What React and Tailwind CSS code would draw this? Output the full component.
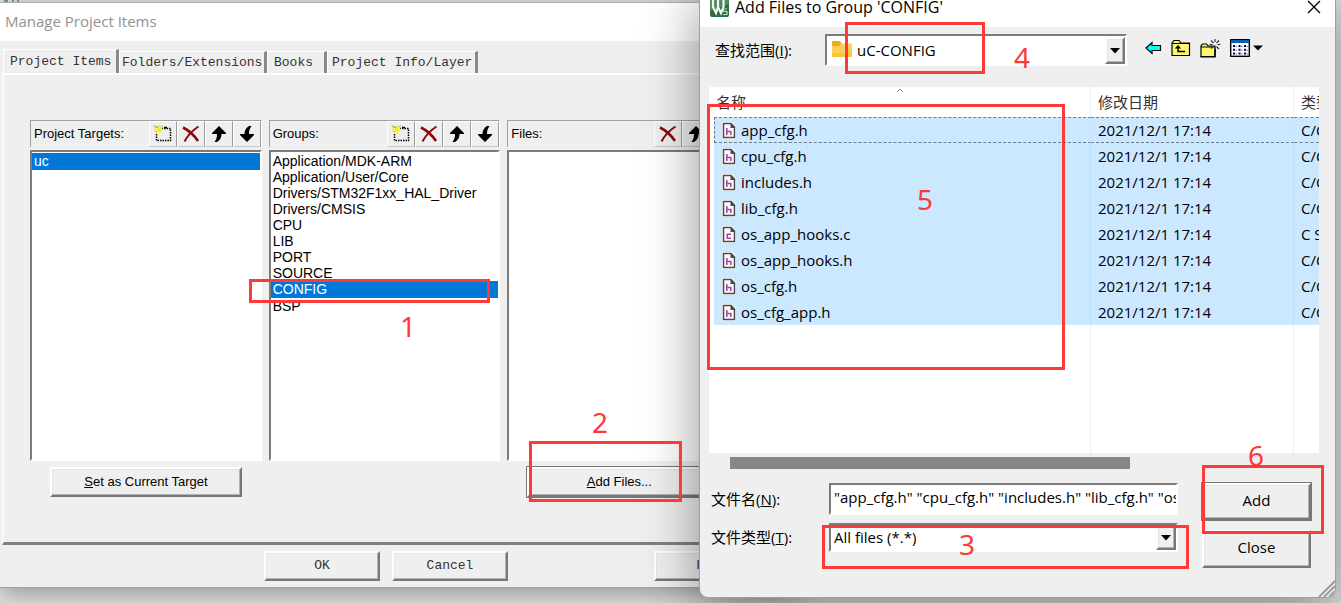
import React from 'react';

const groups = [
  'Application/MDK-ARM',
  'Application/User/Core',
  'Drivers/STM32F1xx_HAL_Driver',
  'Drivers/CMSIS',
  'CPU',
  'LIB',
  'PORT',
  'SOURCE',
  'CONFIG',
  'BSP',
];

const files = [
  { name: 'app_cfg.h', date: '2021/12/1 17:14', type: 'C/C++ Header' },
  { name: 'cpu_cfg.h', date: '2021/12/1 17:14', type: 'C/C++ Header' },
  { name: 'includes.h', date: '2021/12/1 17:14', type: 'C/C++ Header' },
  { name: 'lib_cfg.h', date: '2021/12/1 17:14', type: 'C/C++ Header' },
  { name: 'os_app_hooks.c', date: '2021/12/1 17:14', type: 'C Source' },
  { name: 'os_app_hooks.h', date: '2021/12/1 17:14', type: 'C/C++ Header' },
  { name: 'os_cfg.h', date: '2021/12/1 17:14', type: 'C/C++ Header' },
  { name: 'os_cfg_app.h', date: '2021/12/1 17:14', type: 'C/C++ Header' },
];

const tabs = [
  { label: 'Project Items', className: 'h-6 w-[116px] pl-[6px]' },
  { label: 'Folders/Extensions', className: 'h-[22px] w-[148px] pl-[2px]' },
  { label: 'Books', className: 'h-[22px] w-[60px] pl-[6px]' },
  { label: 'Project Info/Layer', className: 'h-[22px] w-[151px] pl-[4px]' },
];

// Numbered steps drawn over both windows
const marks = [
  { n: 1, box: 'left-[249px] top-[279px] w-[241px] h-[24px]', num: 'left-[400px] top-[310px]' },
  { n: 2, box: 'left-[529px] top-[441px] w-[153px] h-[61px]', num: 'left-[592px] top-[406px]' },
  { n: 3, box: 'left-[822px] top-[525px] w-[367px] h-[44px]', num: 'left-[959px] top-[528px]' },
  { n: 4, box: 'left-[845px] top-[22px] w-[140px] h-[52px]', num: 'left-[1014px] top-[41px]' },
  { n: 5, box: 'left-[707px] top-[104px] w-[358px] h-[266px]', num: 'left-[917px] top-[183px]' },
  { n: 6, box: 'left-[1202px] top-[465px] w-[122px] h-[69px]', num: 'left-[1248px] top-[439px]' },
];

const raised =
  'border-t-2 border-l-2 border-r-2 border-b-2 border-t-white border-l-white border-r-[#777] border-b-[#777] bg-[#efefef] shadow-[inset_-1px_-1px_0_#b4b4b4,inset_1px_1px_0_#e3e3e3]';
const sunken =
  'border-t-2 border-l-2 border-r-2 border-b-2 border-t-[#7b7b7b] border-l-[#7b7b7b] border-r-white border-b-white bg-white';

const NewIcon = () => (
  <svg width="20" height="20" viewBox="0 0 20 20" aria-hidden="true">
    <rect x="3.5" y="4.5" width="14" height="12" fill="none" stroke="#000" strokeWidth="1.500" strokeDasharray="1.5 1" />
    <path d="M0 1h9v8H0z" fill="#efefef" />
    <path d="M6 1v8M1 5.500h9M2.500 2l6 6M9 2L3 8.500" stroke="#f5ee1a" strokeWidth="1.300" />
    <path d="M1 1.500l1.500 2M4 2v2M9.500 1.500l-1 1M2.500 8l1-1" stroke="#8a8a60" />
    <path d="M11 3.500h3" stroke="#000" strokeWidth="1.500" />
  </svg>
);

const DeleteIcon = () => (
  <svg width="20" height="20" viewBox="0 0 20 20" aria-hidden="true">
    <path d="M2 3.500C6 5.500 13 11 17 17" fill="none" stroke="#8b0a0a" strokeWidth="2.600" />
    <path d="M17.500 2.500C12 6 7 11 3.500 17.500" fill="none" stroke="#8b0a0a" strokeWidth="2" />
  </svg>
);

const ArrowIcon = ({ down }) => (
  <svg width="20" height="20" viewBox="0 0 20 20" className={down ? 'rotate-180' : ''} aria-hidden="true">
    <path d="M10 2l7 7v1h-4.500c0 3-1 6-4.500 8H5.500c2-2.500 2.500-5 2.500-8H3V9z" fill="#000" />
  </svg>
);

const FileIcon = ({ kind }) => (
  <svg width="14" height="17" viewBox="0 0 14 17" aria-hidden="true">
    <path d="M0 0h10l4 4v13H0z" fill="#fff" />
    <path d="M1.500 1.500h7.500l3.500 3.500v10.500h-11z" fill="#fdfbfd" stroke="#4a4a4a" strokeWidth="1.500" />
    <path d="M8.500 1v5h5z" fill="#4a4a4a" />
    {kind === 'h' ? (
      <path d="M4.800 6v7M4.800 9.500h4v3.500" fill="none" stroke="#a04ba3" strokeWidth="1.600" />
    ) : (
      <path d="M9 8.300H5.300v4H9" fill="none" stroke="#a04ba3" strokeWidth="1.600" />
    )}
  </svg>
);

const FolderIcon = () => (
  <svg width="20" height="18" viewBox="0 0 20 18" aria-hidden="true">
    <path d="M1 1h7l2 3v6H0V2a1 1 0 0 1 1-1z" fill="#efac13" />
    <path d="M0 6h7l2.500-2.500H19a1 1 0 0 1 1 1V16a1 1 0 0 1-1 1H1a1 1 0 0 1-1-1z" fill="#ffd05a" />
    <path d="M0 13h20v3a1 1 0 0 1-1 1H1a1 1 0 0 1-1-1z" fill="#fbc53c" />
  </svg>
);

const AppIcon = () => (
  <svg width="19" height="20" viewBox="0 0 19 20" aria-hidden="true">
    <rect width="19" height="20" rx="2" fill="#2f6b45" />
    <path d="M0 0h19v7L0 14z" fill="#4f8a62" />
    <path d="M3 2v8l3 6 2-6V3M8 10l3 6 2.500-6V2" fill="none" stroke="#f2f7f3" strokeWidth="2.200" />
    <path d="M17 12h-3.500v2.500H17V17.500h-4" fill="none" stroke="#bfe6a8" strokeWidth="1.200" />
  </svg>
);

const BackIcon = () => (
  <svg width="17" height="14" viewBox="0 0 17 14" aria-hidden="true">
    <path d="M1 7l6-5.500v3h8.500v5H7v3z" fill="#0ff" stroke="#000" strokeWidth="1.200" />
  </svg>
);

const UpFolderIcon = () => (
  <svg width="20" height="18" viewBox="0 0 20 18" aria-hidden="true">
    <path d="M1 16.500V4l2-2.500h5L10 4h8.500v12.500z" fill="#fdf76b" stroke="#000" strokeWidth="1.200" />
    <path d="M1 4.500h17" stroke="#000" />
    <path d="M7 13V7.500M6.300 12.500H14" fill="none" stroke="#000" strokeWidth="1.500" />
    <path d="M3.800 9.500L7 6l3.200 3.500z" fill="#000" />
  </svg>
);

const NewFolderIcon = () => (
  <svg width="21" height="19" viewBox="0 0 21 19" aria-hidden="true">
    <path d="M1 17.500V7l1.500-2h4L8 7h7v10.500z" fill="#fdf76b" stroke="#000" strokeWidth="1.200" />
    <path d="M1 8h13" stroke="#000" />
    <path d="M0.500 17.800h15M15 10v8" stroke="#000" strokeWidth="1.400" />
    <path d="M15 0v3M15 8v3M9.500 5.500h3M17.500 5.500h3M11 1.500l2.500 2.500M19 1.500l-2.500 2.500M19 10l-2.500-2.500M11 9.500l2-2" stroke="#333" strokeWidth="1.200" />
  </svg>
);

const ViewIcon = () => (
  <svg width="34" height="18" viewBox="0 0 34 18" aria-hidden="true">
    <rect x="0.700" y="0.700" width="18.600" height="16.600" fill="#fff" stroke="#000" strokeWidth="1.400" />
    <rect x="1" y="1" width="18" height="3" fill="#0a5cad" />
    <path d="M3 7h2M8.500 7h2M14 7h2M3 10.700h2M8.500 10.700h2M14 10.700h2M3 14.400h2M8.500 14.400h2M14 14.400h2" stroke="#00007c" strokeWidth="2" />
    <path d="M5.500 7.500H7M11 7.500h1.500M16.500 7.500H18M5.500 11.200H7M11 11.200h1.500M16.500 11.200H18M5.500 14.900H7M11 14.900h1.500M16.500 14.900H18" stroke="#777" />
    <path d="M23 6.500h10l-5 5z" fill="#000" />
  </svg>
);

function ToolButton({ label, children }) {
  return (
    <button
      aria-label={label}
      className="flex h-[26px] w-7 items-center justify-center border border-t-white border-l-white border-r-[#9c9c9c] border-b-[#c8c8c8] bg-[#efefef]"
    >
      {children}
    </button>
  );
}

function ListPanel({ title, items, selected, withNew, children }) {
  return (
    <div className="flex flex-col gap-[3px]">
      <div className="flex h-[27px] items-center justify-between border-t border-l border-t-[#a0a0a0] border-l-[#a0a0a0] border-r border-r-white pl-[3px]">
        <span className="text-[13px]">{title}</span>
        <div className="flex">
          {withNew && (
            <ToolButton label={`New ${title}`}>
              <NewIcon />
            </ToolButton>
          )}
          <ToolButton label={`Delete ${title}`}>
            <DeleteIcon />
          </ToolButton>
          <ToolButton label={`Move up ${title}`}>
            <ArrowIcon />
          </ToolButton>
          <ToolButton label={`Move down ${title}`}>
            <ArrowIcon down />
          </ToolButton>
        </div>
      </div>
      <ul role="listbox" aria-label={title} className={`h-[311px] pt-px text-[14px] leading-4 ${sunken}`}>
        {items.map((item) => (
          <li
            key={item}
            role="option"
            aria-selected={item === selected}
            className={item === selected ? 'h-[17px] bg-[#0078d7] pl-[2px] leading-[17px] text-white' : 'pl-[2px]'}
          >
            {item}
          </li>
        ))}
      </ul>
      <div className="flex pt-[3px] pl-5">{children}</div>
    </div>
  );
}

function DropArrow({ className }) {
  return (
    <span className={`pointer-events-none absolute flex w-5 items-center justify-center ${raised} ${className}`}>
      <svg width="10" height="6" viewBox="0 0 10 6" aria-hidden="true">
        <path d="M0 0h10L5 5.500z" fill="#000" />
      </svg>
    </span>
  );
}

function ProjectWindow() {
  return (
    <section className="absolute top-[2px] left-0 w-[800px] border-t border-b border-t-[#b0b0b0] border-b-[#a0a0a0] bg-[#efefef] font-['Liberation_Sans',Arial,sans-serif] text-black shadow-[0_6px_24px_rgba(0,0,0,0.35)]">
      <header className="flex h-[38px] items-center bg-white pb-px pl-[5px] font-['Open_Sans','Noto_Sans_CJK_SC',sans-serif] text-[15px] text-[#929292]">
        <h1>Manage Project Items</h1>
      </header>

      <nav className="flex items-end pt-2 pl-[3px] font-['Liberation_Mono',monospace] text-[13px] text-[#333]">
        {tabs.map((tab) => (
          <button
            key={tab.label}
            className={`flex items-center border-t border-l border-r-[3px] border-t-white border-l-white border-r-[#8a8a8a] whitespace-nowrap ${tab.className}`}
          >
            {tab.label}
          </button>
        ))}
      </nav>

      <div className="ml-[2px] border-t-2 border-b-[3px] border-l-2 border-t-white border-b-[#808080] border-l-[#fafafa] pt-[45px] pb-[45px] pl-[26px]">
        <div className="mr-[61px] grid grid-cols-3 gap-[7px]">
          <ListPanel title="Project Targets:" items={['uc']} selected="uc" withNew>
            <button className={`h-[30px] w-[192px] text-[13px] ${raised}`}>
              <u>S</u>et as Current Target
            </button>
          </ListPanel>
          <ListPanel title="Groups:" items={groups} selected="CONFIG" withNew />
          <ListPanel title="Files:" items={[]}>
            <button className={`h-[30px] w-[184px] text-[13px] outline outline-[#777] ${raised}`}>
              <u>A</u>dd Files...
            </button>
          </ListPanel>
        </div>
      </div>

      <footer className="flex gap-3 pt-[6px] pr-[30px] pb-[6px] pl-[264px] font-['Liberation_Mono',monospace] text-[13px] text-[#333]">
        <button className={`h-[30px] w-[116px] ${raised}`}>OK</button>
        <button className={`h-[30px] w-[116px] ${raised}`}>Cancel</button>
        <button className={`ml-auto h-[30px] w-[116px] ${raised}`}>Help</button>
      </footer>
    </section>
  );
}

function AddFilesDialog() {
  return (
    <section className="absolute -top-[10px] right-[6px] bottom-[6px] left-[700px] flex flex-col overflow-hidden rounded-lg bg-[#efefef] font-['Open_Sans','Noto_Sans_CJK_SC',sans-serif] text-[15px] text-black shadow-[0_0_0_1px_#a0a0a0,0_12px_56px_rgba(0,0,0,0.45)]">
      <header className="flex h-[37px] shrink-0 items-center bg-white pr-[14px] pb-[3px] pl-[10px]">
        <AppIcon />
        <h2 className="pl-[6px] text-base leading-4">Add Files to Group 'CONFIG'</h2>
        <button aria-label="Close dialog" className="ml-auto">
          <svg width="14" height="14" viewBox="0 0 14 14" aria-hidden="true">
            <path d="M1 1l12 12M13 1L1 13" stroke="#000" strokeWidth="1.300" />
          </svg>
        </button>
      </header>

      <div className="flex items-center pt-[7px] pl-[15px]">
        <label htmlFor="look-in" className="w-[110px]">
          查找范围(<u>I</u>):
        </label>
        <div className="relative h-8 w-[302px]">
          <select id="look-in" className={`h-full w-full appearance-none pl-[30px] outline-none ${sunken}`}>
            <option>uC-CONFIG</option>
          </select>
          <span className="pointer-events-none absolute top-[6px] left-[7px]">
            <FolderIcon />
          </span>
          <DropArrow className="top-[3px] right-[2px] bottom-[2px]" />
        </div>
        <div className="flex items-center gap-[9px] pb-1 pl-[18px]">
          <button aria-label="Back"><BackIcon /></button>
          <button aria-label="Up one level"><UpFolderIcon /></button>
          <button aria-label="New folder"><NewFolderIcon /></button>
          <button aria-label="View menu"><ViewIcon /></button>
        </div>
      </div>

      <div className="relative mt-[21px] mr-4 ml-[9px] h-[366px] shrink-0 overflow-hidden bg-white pl-[5px]">
        <svg width="8" height="5" viewBox="0 0 8 5" className="absolute top-px left-[187px]" aria-hidden="true">
          <path d="M1 4l3-3 3 3" fill="none" stroke="#888" />
        </svg>
        <table className="h-full w-full table-fixed border-separate border-spacing-0 text-left">
          <thead>
            <tr className="h-[30px] text-[#333]">
              <th className="w-[377px] border-r border-[#e6f1fb] pl-[2px] font-normal">名称</th>
              <th className="w-[203px] border-r border-[#e6f1fb] pl-[7px] font-normal">修改日期</th>
              <th className="overflow-hidden pl-[7px] font-normal whitespace-nowrap">类型</th>
            </tr>
          </thead>
          <tbody>
            {files.map((file, i) => {
              const edge = i === 0 ? 'border-y border-y-[#6f7f8c] border-dashed' : '';
              return (
                <tr key={file.name} className="h-[26px] bg-[#cce8ff] leading-6">
                  <td className={`border-r border-r-[#bfe0fb] ${edge} ${i === 0 ? 'border-l border-l-[#6f7f8c] pl-[7px]' : 'pl-2'}`}>
                    <span className="flex items-center gap-[5px]">
                      <FileIcon kind={file.name.slice(-1)} />
                      {file.name}
                    </span>
                  </td>
                  <td className={`border-r border-r-[#bfe0fb] pl-[7px] ${edge}`}>{file.date}</td>
                  <td className={`overflow-hidden pl-[7px] whitespace-nowrap ${edge}`}>{file.type}</td>
                </tr>
              );
            })}
            <tr aria-hidden="true">
              <td className="border-r border-[#e6f1fb]" />
              <td className="border-r border-[#e6f1fb]" />
              <td />
            </tr>
          </tbody>
        </table>
      </div>

      <div className="mt-1 ml-[30px] h-3 w-[400px] shrink-0 bg-[#868686]" />

      <div className="flex items-start gap-6 pt-[14px] pr-6 pl-[11px]">
        <div className="flex min-w-0 flex-1 flex-col gap-2">
          <div className="flex items-center">
            <label htmlFor="file-name" className="w-[118px] shrink-0">
              文件名(<u>N</u>):
            </label>
            <input
              id="file-name"
              type="text"
              defaultValue={'"app_cfg.h" "cpu_cfg.h" "includes.h" "lib_cfg.h" "os_app_hooks.c"'}
              className={`h-8 min-w-0 flex-1 pb-1 pl-[3px] outline-none ${sunken}`}
            />
          </div>
          <div className="flex items-center">
            <label htmlFor="file-type" className="w-[118px] shrink-0">
              文件类型(<u>T</u>):
            </label>
            <div className="relative h-[29px] min-w-0 flex-1">
              <select id="file-type" className={`h-full w-full appearance-none pl-[3px] outline-none ${sunken}`}>
                <option>All files (*.*)</option>
              </select>
              <DropArrow className="top-[2px] right-[2px] bottom-[2px]" />
            </div>
          </div>
        </div>
        <div className="flex w-[109px] flex-col gap-[10px]">
          <button className={`h-[37px] pb-[2px] outline outline-[#777] ${raised}`}>Add</button>
          <button className={`h-[38px] pb-[3px] ${raised}`}>Close</button>
        </div>
      </div>

      <svg width="17" height="17" viewBox="0 0 17 17" className="absolute right-0 bottom-0" aria-hidden="true">
        <path d="M1 17L17 1M6 17L17 6M11 17l6-6" stroke="#9a9a9a" strokeWidth="2" />
      </svg>
    </section>
  );
}

export default function App() {
  return (
    <main className="relative h-screen overflow-hidden bg-[#e2e2e2]">
      <svg width="20" height="2" viewBox="0 0 20 2" className="absolute top-0 left-1" aria-hidden="true">
        <path d="M0 1h4M8 1h2M13 1h2" stroke="#4a9a4a" strokeWidth="1.500" />
      </svg>
      <ProjectWindow />
      <AddFilesDialog />
      {marks.map((mark) => (
        <React.Fragment key={mark.n}>
          <div className={`pointer-events-none absolute border-[3px] border-[#fd3a38] ${mark.box}`} />
          <span className={`absolute font-['Noto_Sans',sans-serif] text-[28px] leading-8 text-[#fd3a38] ${mark.num}`}>{mark.n}</span>
        </React.Fragment>
      ))}
    </main>
  );
}
